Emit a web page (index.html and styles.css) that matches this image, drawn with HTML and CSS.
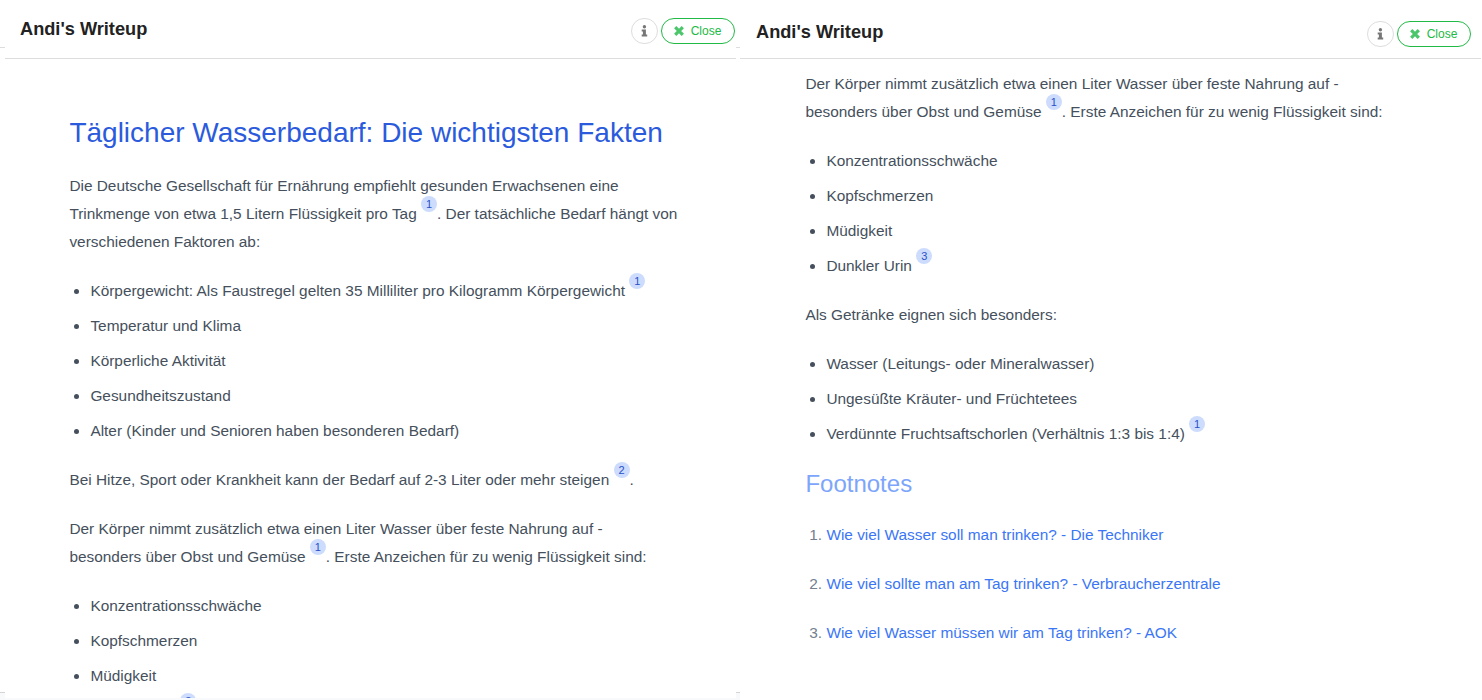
FILE: index.html
```html
<!DOCTYPE html>
<html lang="de">
<head>
    <meta charset="UTF-8">
    <meta name="viewport" content="width=device-width, initial-scale=1.0">
    <title>Andi's Writeup</title>
    <link rel="stylesheet" href="styles.css">
</head>
<body>
    <div class="edge edge-left"></div>
    <section class="panel panel-left">
        <header class="header">
            <h1 class="title">Andi's Writeup</h1>
            <div class="actions">
                <button class="btn-info">
                    <svg width="7" height="12" viewBox="0 0 7 12" fill="#777"><circle cx="3.4" cy="1.8" r="1.7"/><path d="M.7 4.4h4.2v5.2h1.3v2H.7v-2h1.2V6.4H.7z"/></svg>
                </button>
                <button class="btn-close">
                    <svg width="10" height="10" viewBox="0 0 10 10" fill="none" stroke="#4cc66b" stroke-width="3.2"><path d="M1.2 1.2l7.6 7.6M8.8 1.2L1.2 8.8"/></svg>
                    <span>Close</span>
                </button>
            </div>
        </header>
        <article class="content">
            <h2 class="headline">Täglicher Wasserbedarf: Die wichtigsten Fakten</h2>
            <p>Die Deutsche Gesellschaft für Ernährung empfiehlt gesunden Erwachsenen eine<br>
                Trinkmenge von etwa 1,5 Litern Flüssigkeit pro Tag <span class="ref">1</span>. Der tatsächliche Bedarf hängt von<br>
                verschiedenen Faktoren ab:</p>
            <ul>
                <li>Körpergewicht: Als Faustregel gelten 35 Milliliter pro Kilogramm Körpergewicht <span class="ref">1</span></li>
                <li>Temperatur und Klima</li>
                <li>Körperliche Aktivität</li>
                <li>Gesundheitszustand</li>
                <li>Alter (Kinder und Senioren haben besonderen Bedarf)</li>
            </ul>
            <p>Bei Hitze, Sport oder Krankheit kann der Bedarf auf 2-3 Liter oder mehr steigen <span class="ref">2</span>.</p>
            <p>Der Körper nimmt zusätzlich etwa einen Liter Wasser über feste Nahrung auf -<br>
                besonders über Obst und Gemüse <span class="ref">1</span>. Erste Anzeichen für zu wenig Flüssigkeit sind:</p>
            <ul>
                <li>Konzentrationsschwäche</li>
                <li>Kopfschmerzen</li>
                <li>Müdigkeit</li>
                <li>Dunkler Urin <span class="ref">3</span></li>
            </ul>
        </article>
    </section>
    <div class="edge"></div>
    <section class="panel panel-right">
        <header class="header">
            <h1 class="title">Andi's Writeup</h1>
            <div class="actions">
                <button class="btn-info">
                    <svg width="7" height="12" viewBox="0 0 7 12" fill="#777"><circle cx="3.4" cy="1.8" r="1.7"/><path d="M.7 4.4h4.2v5.2h1.3v2H.7v-2h1.2V6.4H.7z"/></svg>
                </button>
                <button class="btn-close">
                    <svg width="10" height="10" viewBox="0 0 10 10" fill="none" stroke="#4cc66b" stroke-width="3.2"><path d="M1.2 1.2l7.6 7.6M8.8 1.2L1.2 8.8"/></svg>
                    <span>Close</span>
                </button>
            </div>
        </header>
        <article class="content">
            <p>Der Körper nimmt zusätzlich etwa einen Liter Wasser über feste Nahrung auf -<br>
                besonders über Obst und Gemüse <span class="ref">1</span>. Erste Anzeichen für zu wenig Flüssigkeit sind:</p>
            <ul>
                <li>Konzentrationsschwäche</li>
                <li>Kopfschmerzen</li>
                <li>Müdigkeit</li>
                <li>Dunkler Urin <span class="ref">3</span></li>
            </ul>
            <p>Als Getränke eignen sich besonders:</p>
            <ul>
                <li>Wasser (Leitungs- oder Mineralwasser)</li>
                <li>Ungesüßte Kräuter- und Früchtetees</li>
                <li>Verdünnte Fruchtsaftschorlen (Verhältnis 1:3 bis 1:4) <span class="ref">1</span></li>
            </ul>
            <h3 class="footnotes-title">Footnotes</h3>
            <ol class="footnotes">
                <li><a href="#">Wie viel Wasser soll man trinken? - Die Techniker</a></li>
                <li><a href="#">Wie viel sollte man am Tag trinken? - Verbraucherzentrale</a></li>
                <li><a href="#">Wie viel Wasser müssen wir am Tag trinken? - AOK</a></li>
            </ol>
        </article>
    </section>
</body>
</html>
```
FILE: styles.css
```css
* {
    box-sizing: border-box;
}
body {
    margin: 0;
    height: 700px;
    overflow: hidden;
    display: flex;
    background: #fff;
    font-family: "Liberation Sans", Arial, sans-serif;
    color: #45505c;
}
.edge {
    width: 4px;
    display: flex;
    flex-direction: column;
    justify-content: space-between;
}
.edge-left {
    width: 5px;
}
.edge::before {
    content: "";
    height: 47px;
    border-bottom: 1px solid #ddd;
}
.edge::after {
    content: "";
    height: 7px;
    border-top: 1px solid #d5d5d5;
    background: #f8f9fa;
}
.panel {
    height: 700px;
    overflow: hidden;
}
.panel-left {
    width: 731px;
    border-bottom: 2px solid #f9fafb;
}
.panel-right {
    width: 741px;
}
.header {
    height: 59px;
    border-bottom: 1px solid #ddd;
    display: flex;
    justify-content: space-between;
    align-items: center;
    padding: 3px 1px 0 15px;
}
.panel-right .header {
    padding: 9px 10px 0 16px;
}
.title {
    margin: 0 0 4px;
    font-size: 18.2px;
    line-height: 24px;
    color: #222;
}
.actions {
    display: flex;
    gap: 3px;
}
.btn-info,
.btn-close {
    height: 26px;
    padding: 0;
    background: #fff;
    border: 1px solid #ddd;
    border-radius: 13px;
    display: flex;
    align-items: center;
    justify-content: center;
}
.btn-info {
    width: 27px;
}
.btn-close {
    width: 74px;
    gap: 7px;
    padding-right: 1px;
    border-color: #21ba45;
    color: #21ba45;
    font-family: inherit;
    font-size: 12px;
}
.content {
    padding: 54px 0 0 64.4px;
    font-size: 15.4px;
    line-height: 28px;
    white-space: nowrap;
}
.panel-right .content {
    padding: 11px 0 0 65.4px;
}
.headline {
    margin: 0 0 19px;
    font-size: 28px;
    line-height: 40px;
    font-weight: normal;
    color: #2b5bdc;
}
p {
    margin: 0 0 21px;
}
ul,
ol {
    margin: 0 0 21px;
    padding-left: 21px;
}
ul li + li {
    margin-top: 7px;
}
.ref {
    display: inline-block;
    overflow: hidden;
    width: 16px;
    height: 16px;
    margin-top: -8px;
    border-radius: 50%;
    background: #cddcfd;
    color: #2850c8;
    font-size: 11px;
    line-height: 16px;
    text-align: center;
    vertical-align: 7px;
}
.footnotes-title {
    margin: 0 0 23px;
    font-size: 24px;
    line-height: 29px;
    font-weight: normal;
    color: #7da5fb;
}
.footnotes li + li {
    margin-top: 21px;
}
.footnotes li::marker {
    color: #728090;
}
.footnotes a {
    color: #3b76f6;
    text-decoration: none;
}
```
